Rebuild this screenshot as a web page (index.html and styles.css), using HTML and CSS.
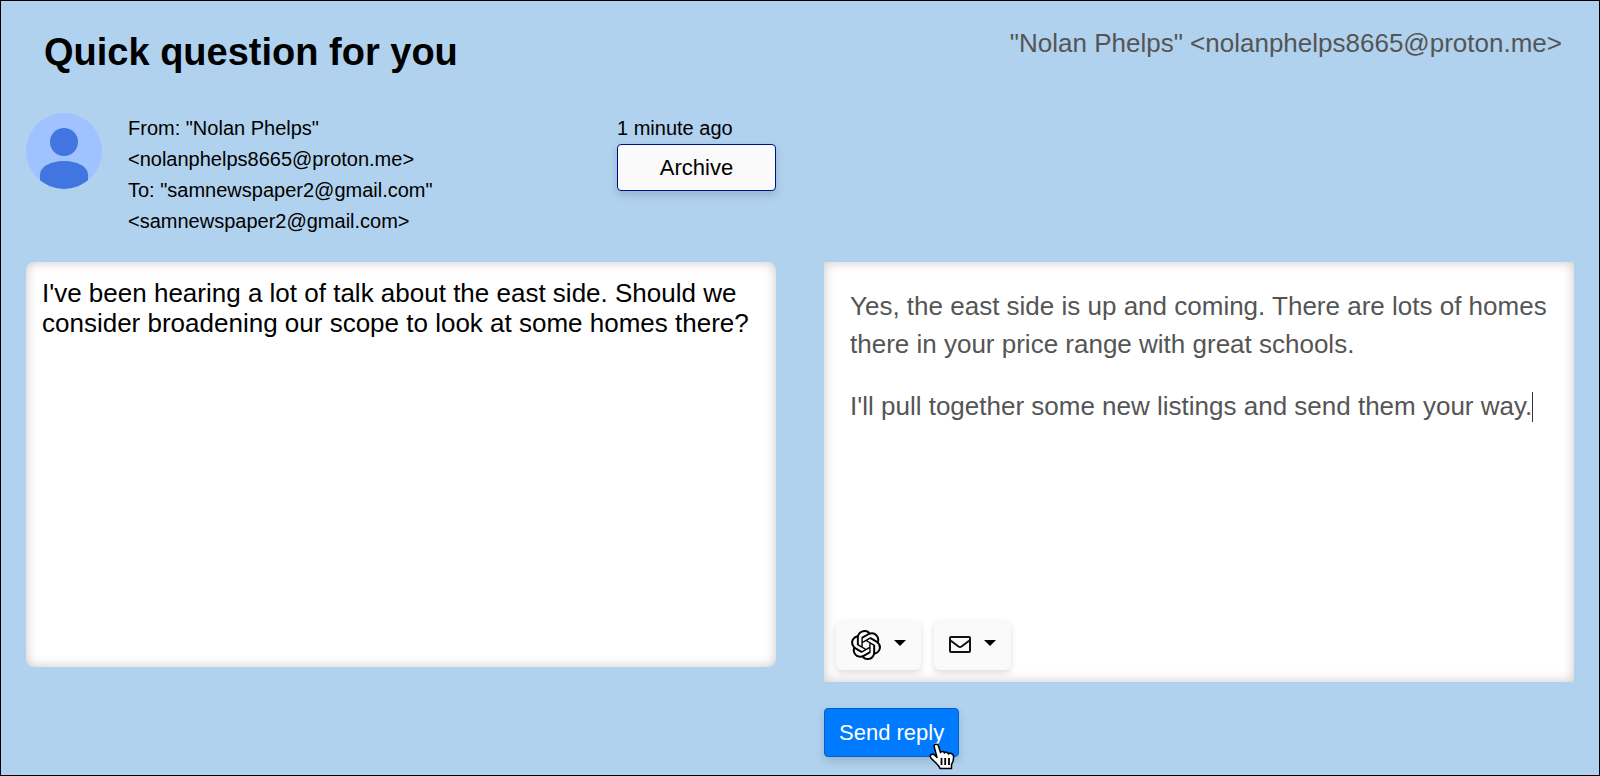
FILE: index.html
```html
<!DOCTYPE html>
<html lang="en">
<head>
<meta charset="utf-8">
<title>Quick question for you</title>
<link rel="stylesheet" href="styles.css">
</head>
<body>
<main class="page">
  <section class="column">
    <header class="head">
      <h1 class="subject">Quick question for you</h1>
      <div class="meta">
        <svg class="avatar" viewBox="0 0 76 76" aria-hidden="true">
          <defs><clipPath id="disc"><circle cx="38" cy="38" r="38"/></clipPath></defs>
          <g clip-path="url(#disc)">
            <rect width="76" height="76" fill="#a0c2ff"/>
            <circle cx="38" cy="29" r="14" fill="#4175df"/>
            <path d="M14 76V62C14 53 26 48 38 48S62 53 62 62V76Z" fill="#4175df"/>
          </g>
        </svg>
        <div class="people">
          <div>From: "Nolan Phelps"<br>&lt;nolanphelps8665@proton.me&gt;</div>
          <div>To: "samnewspaper2@gmail.com"<br>&lt;samnewspaper2@gmail.com&gt;</div>
        </div>
        <div class="status">
          <span>1 minute ago</span>
          <button type="button" class="archive">Archive</button>
        </div>
      </div>
    </header>
    <article class="message">I've been hearing a lot of talk about the east side. Should we consider broadening our scope to look at some homes there?</article>
  </section>

  <section class="column">
    <header class="head">
      <div class="recipient">"Nolan Phelps" &lt;nolanphelps8665@proton.me&gt;</div>
    </header>
    <div class="editor">
      <div class="reply" contenteditable="true" role="textbox" aria-multiline="true" aria-label="Reply" spellcheck="false">
        <p>Yes, the east side is up and coming. There are lots of homes there in your price range with great schools.</p>
        <p>I'll pull together some new listings and send them your way.<span class="caret"></span></p>
      </div>
      <div class="tools">
        <button type="button" class="tool" aria-label="AI assistant">
          <svg class="ai" viewBox="0 0 24 24" aria-hidden="true"><path d="M22.2819 9.8211a5.9847 5.9847 0 0 0-.5157-4.9108 6.0462 6.0462 0 0 0-6.5098-2.9A6.0651 6.0651 0 0 0 4.9807 4.1818a5.9847 5.9847 0 0 0-3.9977 2.9 6.0462 6.0462 0 0 0 .7427 7.0966 5.98 5.98 0 0 0 .511 4.9107 6.051 6.051 0 0 0 6.5146 2.9001A5.9847 5.9847 0 0 0 13.2599 24a6.0557 6.0557 0 0 0 5.7718-4.2058 5.9894 5.9894 0 0 0 3.9977-2.9001 6.0557 6.0557 0 0 0-.7475-7.0729zm-9.022 12.6081a4.4755 4.4755 0 0 1-2.8764-1.0408l.1419-.0804 4.7783-2.7582a.7948.7948 0 0 0 .3927-.6813v-6.7369l2.02 1.1686a.071.071 0 0 1 .038.052v5.5826a4.504 4.504 0 0 1-4.4945 4.4944zm-9.6607-4.1254a4.4708 4.4708 0 0 1-.5346-3.0137l.142.0852 4.783 2.7582a.7712.7712 0 0 0 .7806 0l5.8428-3.3685v2.3324a.0804.0804 0 0 1-.0332.0615L9.74 19.9502a4.4992 4.4992 0 0 1-6.1408-1.6464zM2.3408 7.8956a4.485 4.485 0 0 1 2.3655-1.9728V11.6a.7664.7664 0 0 0 .3879.6765l5.8144 3.3543-2.0201 1.1685a.0757.0757 0 0 1-.071 0l-4.8303-2.7865A4.504 4.504 0 0 1 2.3408 7.872zm16.5963 3.8558L13.1038 8.364 15.1192 7.2a.0757.0757 0 0 1 .071 0l4.8303 2.7913a4.4944 4.4944 0 0 1-.6765 8.1042v-5.6772a.79.79 0 0 0-.407-.667zm2.0107-3.0231l-.142-.0852-4.7735-2.7818a.7759.7759 0 0 0-.7854 0L9.409 9.2297V6.8974a.0662.0662 0 0 1 .0284-.0615l4.8303-2.7866a4.4992 4.4992 0 0 1 6.6802 4.66zM8.3065 12.863l-2.02-1.1638a.0804.0804 0 0 1-.038-.0567V6.0742a4.4992 4.4992 0 0 1 7.3757-3.4537l-.142.0805L8.704 5.459a.7948.7948 0 0 0-.3927.6813zm1.0976-2.3654l2.602-1.4998 2.6069 1.4998v2.9994l-2.5974 1.4997-2.6067-1.4997Z"/></svg>
          <svg class="arrow" viewBox="0 0 12 10" aria-hidden="true"><path d="M0 0H12L6 6Z"/></svg>
        </button>
        <button type="button" class="tool" aria-label="Email templates">
          <svg class="mail" viewBox="0 0 22 18" aria-hidden="true"><rect x="1" y="1" width="20" height="15" rx="1" fill="none" stroke="#111" stroke-width="2"/><path d="M1.500 4.500L9.500 10.500Q11 11.500 12.500 10.500L20.500 4.500" fill="none" stroke="#111" stroke-width="2"/></svg>
          <svg class="arrow" viewBox="0 0 12 10" aria-hidden="true"><path d="M0 0H12L6 6Z"/></svg>
        </button>
      </div>
    </div>
    <div class="actions">
      <button type="button" class="send">Send reply
        <svg class="pointer" viewBox="0 0 26 27" aria-hidden="true"><path d="M5 3C5 .5 9 .5 9.500 3L11.500 9.500C12 8 15 8 15.500 10C16.500 8.500 19 9 19.500 11C21 9.500 24 10.500 24.500 13C25 17 24 19 22.500 21.500V25.500H11C10 22 5 18.500 2 15C0 12 3 10 5.500 12L8 14.500Z" fill="#fff" stroke="#000" stroke-width="1.500" stroke-linejoin="round"/><path d="M12.500 15V22M16.200 15V22M20 15V22" stroke="#000" stroke-width="1.800"/></svg>
      </button>
    </div>
  </section>
</main>
</body>
</html>
```
FILE: styles.css
```css
* { box-sizing: border-box; }

body {
  margin: 0;
  font-family: "Liberation Sans", Arial, sans-serif;
  color: #000;
}

.page {
  display: grid;
  grid-template-columns: 1fr 1fr;
  gap: 48px;
  min-height: 100vh;
  padding: 0 25px;
  border: 1px solid #000;
  background: #b0d2ee;
}

.head { min-height: 261px; }

.subject {
  margin: 0;
  padding: 28px 18px 0;
  font-size: 38px;
  line-height: 46px;
}

.meta {
  display: flex;
  gap: 26px;
  padding-top: 38px;
}

.avatar {
  flex: none;
  width: 76px;
  height: 76px;
}

.people {
  flex: 1;
  font-size: 20px;
  line-height: 31px;
}

.status {
  display: flex;
  flex-direction: column;
  width: 159px;
  font-size: 20px;
  line-height: 31px;
}

.archive {
  height: 47px;
  border: 1px solid #00108c;
  border-radius: 4px;
  background: #fafafa;
  box-shadow: 0 4px 8px rgba(0, 0, 0, 0.15);
  color: #000;
  font: 22px "Liberation Sans", Arial, sans-serif;
}

.message {
  min-height: 405px;
  padding: 16px;
  border-radius: 8px;
  background: #fff;
  box-shadow: inset 0 0 12px rgba(0, 0, 0, 0.22);
  font-size: 26px;
  line-height: 30px;
}

.recipient {
  padding: 26px 12px 0;
  color: #555;
  font-size: 26px;
  line-height: 32px;
  text-align: right;
}

.editor {
  display: flex;
  flex-direction: column;
  min-height: 420px;
  padding: 12px;
  background: #fff;
  box-shadow: inset 0 0 12px rgba(0, 0, 0, 0.22);
}

.reply {
  flex: 1;
  padding: 13px 8px 12px 14px;
  outline: none;
  color: #555;
  font-size: 26px;
  line-height: 38px;
}

.reply p { margin: 0 0 24px; }

.caret {
  display: inline-block;
  width: 1px;
  height: 30px;
  background: #333;
  vertical-align: -7px;
}

.tools {
  display: flex;
  gap: 13px;
}

.tool {
  display: flex;
  align-items: center;
  gap: 13px;
  height: 50px;
  padding: 0 15px;
  border: 0;
  border-radius: 6px;
  background: #fafafa;
  box-shadow: 0 3px 6px rgba(0, 0, 0, 0.13);
}

.ai { width: 30px; height: 30px; }
.mail { width: 22px; height: 18px; }
.arrow { width: 12px; height: 10px; }

.actions { padding-top: 26px; }

.send {
  position: relative;
  height: 49px;
  padding: 0 14px;
  border: 1px solid #0062cc;
  border-radius: 4px;
  background: #007bff;
  box-shadow: 0 4px 8px rgba(0, 0, 0, 0.15);
  color: #fff;
  font: 22px "Liberation Sans", Arial, sans-serif;
}

.pointer {
  position: absolute;
  right: 3px;
  bottom: -14px;
  width: 26px;
  height: 27px;
}
```
